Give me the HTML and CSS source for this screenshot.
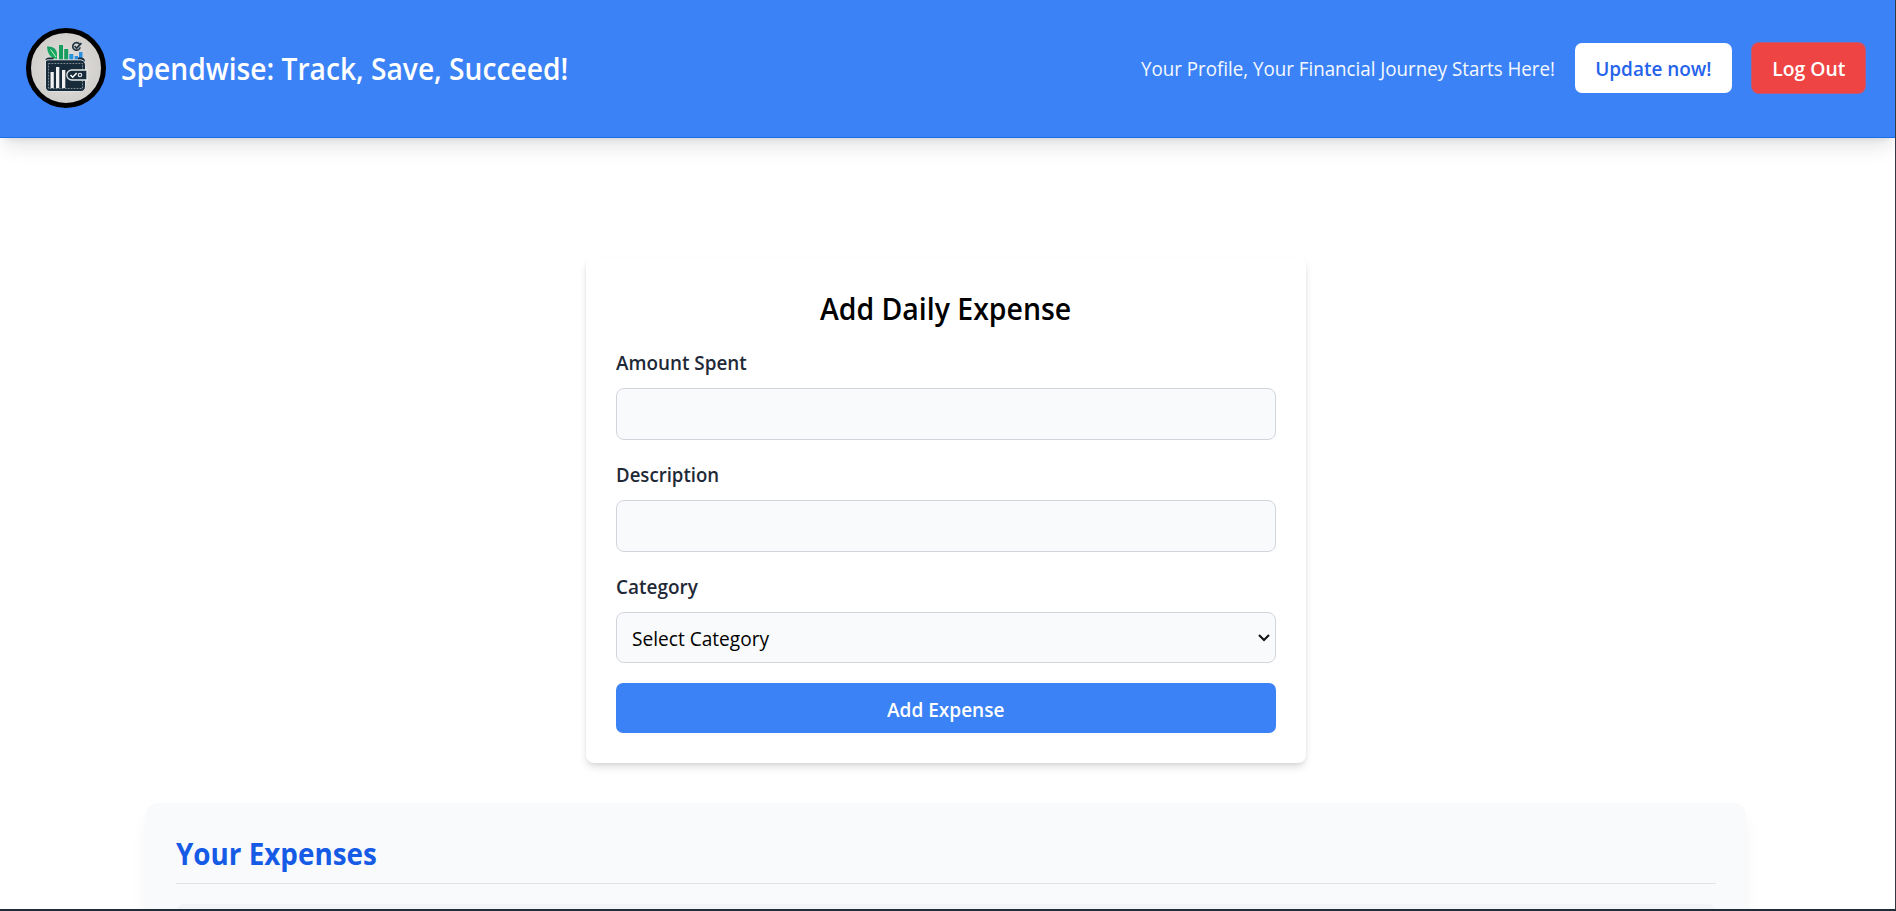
FILE: index.html
```
<!DOCTYPE html>
<html lang="en">
<head>
<meta charset="utf-8">
<title>Spendwise</title>
<link rel="stylesheet" href="styles.css">
</head>
<body>
<div class="page">
  <header class="header">
    <div class="brand">
      <svg class="logo" viewBox="0 0 80 80" aria-hidden="true">
        <defs>
          <radialGradient id="disc"><stop offset="0" stop-color="#e4e1dd"/><stop offset="1" stop-color="#d0cecb"/></radialGradient>
          <linearGradient id="leaf" x2="0" y2="1"><stop offset="0" stop-color="#159b62"/><stop offset="1" stop-color="#16b45a"/></linearGradient>
        </defs>
        <circle cx="40" cy="40" r="37.5" fill="url(#disc)" stroke="#000" stroke-width="5"/>
        <path d="M31 31C25 30 21.500 26.500 21 18.500C27 18 31 21 31 26Z" fill="url(#leaf)"/>
        <path d="M24.500 21.500L30 29" stroke="#d5eadc" stroke-width="1"/>
        <path d="M33 17h4v15h-4zM38.200 21h4v11h-4z" fill="#179d60"/>
        <path d="M43.300 26h4v6h-4z" fill="#2694d9"/>
        <path d="M48.600 28h3.500v4h-3.500zM53 24h3.500v8H53z" fill="#2a8fe0"/>
        <path d="M53.600 16.200a3.800 3.800 0 1 0 .6 3.200M48.600 18l2 2.200 4.800-5" fill="none" stroke="#203442" stroke-width="1.700"/>
        <path d="M19.500 32q0-2.500 4-2.500h4.500l-1 3zM52 29.500h2.500q4.500 0 4.500 4h-7z" fill="#172b3b"/>
        <path d="M19.500 33q1-1.500 4-1.200H55q4.500 1 4.500 6V58q0 5.500-5 5.500H24q-4.500 0-4.500-5z" fill="#172b3b" stroke="#eceded" stroke-width=".9"/>
        <path d="M22.500 35.500h34v25h-34z" fill="none" stroke="#9eaab1" stroke-width=".8" stroke-dasharray="1.800 1.200"/>
        <path d="M24.500 44h3.300v16h-3.300zM30 39h3.300v21H30zM36 42h3.300v18H36z" fill="#f0f1f0"/>
        <path d="M61 42H45.800a5 5 0 0 0 0 10H61z" fill="#172b3b" stroke="#e8eaea" stroke-width="1.300"/>
        <path d="M44.500 47l2.200 2.200 4-4.200" fill="none" stroke="#fff" stroke-width="1.600"/>
        <circle cx="54" cy="47" r="1.700" fill="none" stroke="#ddd" stroke-width="1.300"/>
      </svg>
      <h1 class="title">Spendwise: Track, Save, Succeed!</h1>
    </div>
    <nav class="nav">
      <span class="tagline">Your Profile, Your Financial Journey Starts Here!</span>
      <button class="btn update"><span>Update now!</span></button>
      <button class="btn logout"><span>Log Out</span></button>
    </nav>
  </header>
  <form class="card">
    <h2 class="heading"><span>Add Daily Expense</span></h2>
    <label class="field"><span class="label amount">Amount Spent</span><input class="input"></label>
    <label class="field"><span class="label desc">Description</span><input class="input"></label>
    <div class="field"><span class="label cat">Category</span>
      <div class="select"><span>Select Category</span>
        <svg width="12" height="8" viewBox="0 0 12 8"><path d="M1 1l5 5 5-5" fill="none" stroke="#111" stroke-width="2"/></svg>
      </div>
    </div>
    <button class="submit" type="button"><span>Add Expense</span></button>
  </form>
  <section class="expenses">
    <h2 class="expenses-title"><span>Your Expenses</span></h2>
    <div class="row"></div>
  </section>
</div>
</body>
</html>
```
FILE: styles.css
```
* { box-sizing: border-box; margin: 0; padding: 0; }
body { background: #fff; font-family: "Open Sans", "Noto Sans", sans-serif; font-size: 20px; }
.page { width: 1896px; height: 911px; overflow: hidden; border-right: 1px solid #343a40; border-bottom: 2px solid #1f2d3a; }
button { border: 0; font: inherit; }
button span, .heading span, .expenses-title span, .select span { display: inline-block; white-space: nowrap; }
.header { height: 138px; padding: 0 30px 2px 26px; display: flex; align-items: center; justify-content: space-between; background: #3b82f6; border-bottom: 1px solid #1c6cea; color: #fff; box-shadow: 0 12px 19px -4px rgba(0,0,0,.11), 0 5px 7px -5px rgba(0,0,0,.12); }
.brand { display: flex; align-items: center; gap: 15px; }
.logo { width: 80px; height: 80px; }
.title { padding-top: 2px; font-size: 30px; font-weight: 600; line-height: 40px; white-space: nowrap; transform: scaleX(.939); transform-origin: left; }
.nav { display: flex; align-items: center; gap: 20px; white-space: nowrap; }
.tagline { width: 414px; padding-top: 2px; color: #f5f9ff; transform: scaleX(.937); transform-origin: left; }
.btn { height: 50px; padding-top: 2px; border-radius: 7px; font-weight: 600; display: flex; align-items: center; justify-content: center; }
.update { width: 157px; background: #fff; color: #2563eb; }
.update span { transform: scaleX(.947); }
.logout { width: 113px; background: #ef4444; color: #fff; box-shadow: 0 0 0 1px #b95b7a; }
.logout span { transform: scaleX(.967); }
.card { width: 720px; height: 506px; margin: 119px 0 0 586px; padding: 30px; border-radius: 8px; box-shadow: 0 5px 8px -1px rgba(0,0,0,.12), 0 2px 5px -2px rgba(0,0,0,.12); }
.heading { height: 44px; margin-bottom: 17px; text-align: center; font-size: 30px; line-height: 44px; font-weight: 600; color: #000; }
.heading span { transform: scaleX(.948); }
.field { display: block; height: 92px; margin-bottom: 20px; }
.label { display: block; height: 30px; line-height: 30px; margin-bottom: 10px; font-weight: 600; color: #1f2937; transform-origin: left; }
.amount { transform: scaleX(.943); }
.desc { transform: scaleX(.93); }
.cat { transform: scaleX(.947); }
.input, .select { display: flex; width: 660px; height: 52px; border: 1px solid #d1d5db; border-radius: 8px; background: #f9fafb; }
.select { height: 51px; padding: 0 5px 0 15px; align-items: center; justify-content: space-between; color: #000; }
.select span { padding-top: 1px; transform: scaleX(.955); transform-origin: left; }
.submit { display: block; width: 660px; height: 50px; margin-top: -1px; padding-top: 2px; border-radius: 7px; background: #3b82f6; color: #fff; font-weight: 600; }
.submit span { transform: scaleX(.951); }
.expenses { width: 1600px; height: 180px; margin: 40px 0 0 146px; padding: 30px; border-radius: 12px; background: #f9fafb; box-shadow: 0 12px 19px -4px rgba(0,0,0,.08), 0 4px 8px -5px rgba(0,0,0,.05); }
.expenses-title { height: 51px; border-bottom: 1px solid #e1e4e8; font-size: 30px; line-height: 42px; font-weight: 700; color: #155be6; }
.expenses-title span { transform: scaleX(.927); transform-origin: left; }
.row { height: 80px; margin-top: 20px; border-radius: 8px; background: #f3f4f6; }
```
